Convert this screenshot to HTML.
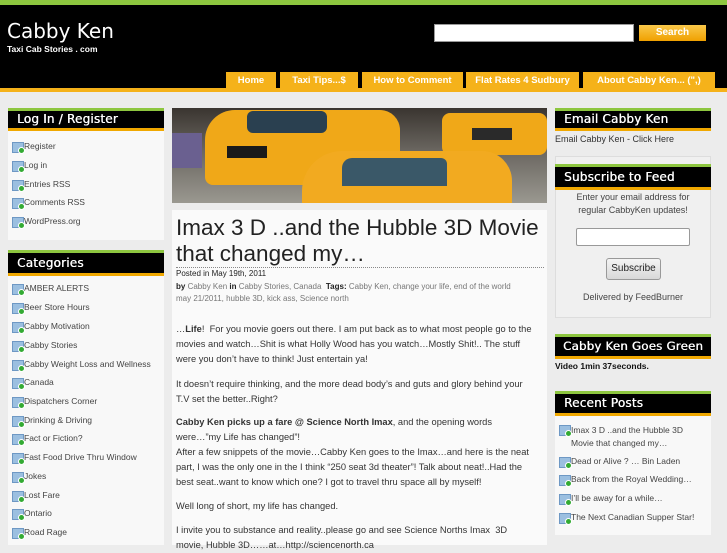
<!DOCTYPE html>
<html><head><meta charset="utf-8"><style>
*{margin:0;padding:0;box-sizing:border-box}
body{width:727px;height:545px;overflow:hidden;background:#ececec;font-family:"Liberation Sans",sans-serif;position:relative;font-size:9px;color:#333}
.abs{position:absolute}
#top{left:0;top:0;width:727px;height:5px;background:#8dc63f}
#hdr{left:0;top:5px;width:727px;height:84px;background:#000}
#obar{left:0;top:88px;width:727px;height:4px;background:#f5b21a}
.tab{position:absolute;top:72px;height:18px;background:#f5b21a;color:#fff;font-weight:bold;font-size:9.5px;line-height:18px;text-align:center}
.wh{position:absolute;background:#000;border-top:3px solid #8dc63f;border-bottom:3px solid #f0a800;color:#fff;font-size:12px;letter-spacing:.2px;padding-left:9px;font-family:"DejaVu Sans",sans-serif;text-shadow:0.4px 0 0 #fff;white-space:nowrap;overflow:hidden}
.panel{position:absolute;background:#f8f8f8}
.li{position:absolute;font-size:8.5px;color:#444;padding-left:14px;white-space:nowrap}
.li:before{content:"";position:absolute;left:2px;top:1px;width:10px;height:9px;background:#9bbfe0;border:1px solid #6e98c4}
.li:after{content:"";position:absolute;left:8px;top:6px;width:5px;height:5px;border-radius:50%;background:#3a3;border:1px solid #fff}
.p{position:absolute;left:176px;font-size:9.3px;color:#333;line-height:15px;white-space:nowrap}
.meta{position:absolute;left:176px;font-size:8px;color:#777;white-space:nowrap}
</style></head><body>
<div id="top" class="abs"></div>
<div id="hdr" class="abs"></div>
<div class="abs" style="left:7px;top:19px;color:#fff;font-size:20px;font-family:'DejaVu Sans',sans-serif">Cabby Ken</div>
<div class="abs" style="left:7px;top:44px;color:#fff;font-size:8.5px;font-weight:bold">Taxi Cab Stories . com</div>
<div class="abs" style="left:434px;top:24px;width:200px;height:18px;background:#fff;border:1px solid #999"></div>
<div class="abs" style="left:639px;top:25px;width:67px;height:16px;background:linear-gradient(#f9c84a,#f0a000);color:#fff;font-weight:bold;font-size:10px;text-align:center;line-height:16px">Search</div>
<div class="tab" style="left:226px;width:50px">Home</div>
<div class="tab" style="left:280px;width:78px">Taxi Tips...$</div>
<div class="tab" style="left:362px;width:101px">How to Comment</div>
<div class="tab" style="left:466px;width:113px">Flat Rates 4 Sudbury</div>
<div class="tab" style="left:583px;width:132px">About Cabby Ken... (",)</div>
<div id="obar" class="abs"></div>

<!-- left -->
<div class="panel" style="left:8px;top:108px;width:156px;height:132px"></div>
<div class="wh" style="left:8px;top:108px;width:156px;height:23px;line-height:17px">Log In / Register</div>
<div class="li" style="left:10px;top:141px">Register</div>
<div class="li" style="left:10px;top:160px">Log in</div>
<div class="li" style="left:10px;top:179px">Entries RSS</div>
<div class="li" style="left:10px;top:197px">Comments RSS</div>
<div class="li" style="left:10px;top:216px">WordPress.org</div>
<div class="panel" style="left:8px;top:250px;width:156px;height:295px"></div>
<div class="wh" style="left:8px;top:250px;width:156px;height:26px;line-height:20px">Categories</div>
<div class="li" style="left:10px;top:283px">AMBER ALERTS</div>
<div class="li" style="left:10px;top:302px">Beer Store Hours</div>
<div class="li" style="left:10px;top:321px">Cabby Motivation</div>
<div class="li" style="left:10px;top:340px">Cabby Stories</div>
<div class="li" style="left:10px;top:359px">Cabby Weight Loss and Wellness</div>
<div class="li" style="left:10px;top:377px">Canada</div>
<div class="li" style="left:10px;top:396px">Dispatchers Corner</div>
<div class="li" style="left:10px;top:415px">Drinking &amp; Driving</div>
<div class="li" style="left:10px;top:433px">Fact or Fiction?</div>
<div class="li" style="left:10px;top:452px">Fast Food Drive Thru Window</div>
<div class="li" style="left:10px;top:471px">Jokes</div>
<div class="li" style="left:10px;top:490px">Lost Fare</div>
<div class="li" style="left:10px;top:508px">Ontario</div>
<div class="li" style="left:10px;top:527px">Road Rage</div>

<!-- center image -->
<div class="abs" style="left:172px;top:108px;width:375px;height:95px;overflow:hidden;background:linear-gradient(180deg,#3a3530 0%,#6a6660 45%,#9a9890 100%)">
 <div class="abs" style="left:0;top:25px;width:30px;height:35px;background:#6a6090"></div>
 <div class="abs" style="left:33px;top:2px;width:195px;height:75px;background:#f0a818;border-radius:30px 20px 8px 8px"></div>
 <div class="abs" style="left:75px;top:3px;width:80px;height:22px;background:#2a4050;border-radius:6px"></div>
 <div class="abs" style="left:55px;top:38px;width:40px;height:12px;background:#1a1a1a"></div>
 <div class="abs" style="left:270px;top:5px;width:105px;height:42px;background:#f0a818;border-radius:8px"></div>
 <div class="abs" style="left:300px;top:20px;width:40px;height:12px;background:#2a2a2a"></div>
 <div class="abs" style="left:130px;top:43px;width:210px;height:60px;background:#f2aa20;border-radius:40px 30px 0 0"></div>
 <div class="abs" style="left:170px;top:50px;width:105px;height:28px;background:#3a5868;border-radius:10px 6px 0 0"></div>
</div>

<!-- post -->
<div class="panel" style="left:172px;top:210px;width:375px;height:335px;background:#fafafa"></div>
<div class="abs" style="left:176px;top:215px;font-size:22.5px;line-height:26px;color:#222;font-family:'Liberation Sans',sans-serif;white-space:nowrap">Imax 3 D ..and the Hubble 3D Movie<br>that changed my…</div>
<div class="abs" style="left:176px;top:267px;width:368px;border-top:1px dotted #888"></div>
<div class="meta" style="top:269px;color:#222">Posted in May 19th, 2011</div>
<div class="meta" style="top:282px"><b style="color:#222">by</b> Cabby Ken <b style="color:#222">in</b> Cabby Stories, Canada &nbsp;<b style="color:#222">Tags:</b> Cabby Ken, change your life, end of the world</div>
<div class="meta" style="top:294px">may 21/2011, hubble 3D, kick ass, Science north</div>
<div class="p" style="top:322px">…<b>Life</b>! &nbsp;For you movie goers out there. I am put back as to what most people go to the<br>movies and watch…Shit is what Holly Wood has you watch…Mostly Shit!.. The stuff<br>were you don’t have to think! Just entertain ya!</div>
<div class="p" style="top:377px">It doesn’t require thinking, and the more dead body’s and guts and glory behind your<br>T.V set the better..Right?</div>
<div class="p" style="top:415px"><b>Cabby Ken picks up a fare @ Science North Imax</b>, and the opening words<br>were…”my Life has changed”!<br>After a few snippets of the movie…Cabby Ken goes to the Imax…and here is the neat<br>part, I was the only one in the I think “250 seat 3d theater”! Talk about neat!..Had the<br>best seat..want to know which one? I got to travel thru space all by myself!</div>
<div class="p" style="top:499px">Well long of short, my life has changed.</div>
<div class="p" style="top:523px">I invite you to substance and reality..please go and see Science Norths Imax &nbsp;3D<br>movie, Hubble 3D……at…http://sciencenorth.ca</div>

<!-- right -->
<div class="wh" style="left:555px;top:108px;width:156px;height:23px;line-height:17px">Email Cabby Ken</div>
<div class="abs" style="left:555px;top:134px;font-size:9px;color:#333">Email Cabby Ken - Click Here</div>
<div class="panel" style="left:555px;top:156px;width:156px;height:162px;border:1px solid #ddd;background:#f0f0f0"></div>
<div class="wh" style="left:555px;top:164px;width:156px;height:26px;line-height:20px">Subscribe to Feed</div>
<div class="abs" style="left:555px;top:191px;width:156px;text-align:center;font-size:9px;line-height:13px;color:#444">Enter your email address for<br>regular CabbyKen updates!</div>
<div class="abs" style="left:576px;top:228px;width:114px;height:18px;background:#fff;border:1px solid #999;border-radius:2px"></div>
<div class="abs" style="left:606px;top:258px;width:55px;height:22px;background:linear-gradient(#f4f4f4,#d8d8d8);border:1px solid #999;border-radius:3px;font-size:10px;text-align:center;line-height:20px;color:#222">Subscribe</div>
<div class="abs" style="left:555px;top:292px;width:156px;text-align:center;font-size:9px;color:#444">Delivered by FeedBurner</div>
<div class="wh" style="left:555px;top:334px;width:156px;height:25px;line-height:19px;padding-left:8px;font-size:11.8px">Cabby Ken Goes Green</div>
<div class="abs" style="left:555px;top:361px;font-size:8.5px;font-weight:bold;color:#111">Video 1min 37seconds.</div>
<div class="panel" style="left:555px;top:391px;width:156px;height:144px"></div>
<div class="wh" style="left:555px;top:391px;width:156px;height:25px;line-height:19px">Recent Posts</div>
<div class="li" style="left:557px;top:424px;line-height:13px;white-space:normal;width:150px">Imax 3 D ..and the Hubble 3D Movie that changed my…</div>
<div class="li" style="left:557px;top:456px">Dead or Alive ? … Bin Laden</div>
<div class="li" style="left:557px;top:474px">Back from the Royal Wedding…</div>
<div class="li" style="left:557px;top:493px">I’ll be away for a while…</div>
<div class="li" style="left:557px;top:512px">The Next Canadian Supper Star!</div>
</body></html>
